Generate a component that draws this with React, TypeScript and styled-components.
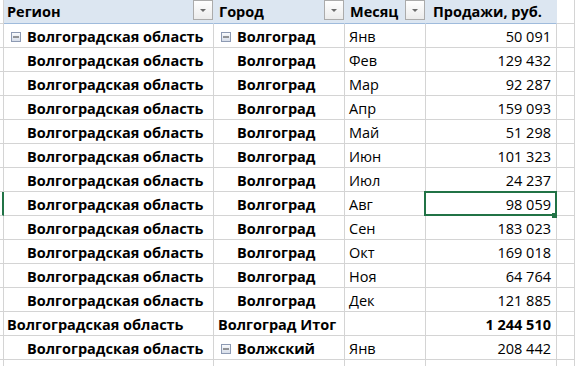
import { FC } from 'react';
import styled, { createGlobalStyle } from 'styled-components';

const GRID = '#d4d4d4';
const GREEN = '#217346';
const HEAD_BG = '#dce6f1';

const GlobalStyle = createGlobalStyle`
  html, body {
    margin: 0;
    padding: 0;
    background: #ffffff;
  }
  body {
    font-family: 'Open Sans', 'Liberation Sans', sans-serif;
    font-size: 14.5px;
    color: #000000;
    overflow: hidden;
  }
`;

const Sheet = styled.div`
  display: grid;
  grid-template-columns: 4px 210px 131px 81px 131px 1fr;
  grid-auto-rows: 24px;
  width: 575px;
  height: 366px;
  overflow: hidden;
`;

const RowHead = styled.div<{ $active?: boolean }>`
  box-sizing: border-box;
  border-bottom: 1px solid ${GRID};
  border-right: ${(p) => (p.$active ? `2px solid ${GREEN}` : `1px solid ${GRID}`)};
`;

const HeadCell = styled.div<{ $plain?: boolean; $indent?: number }>`
  box-sizing: border-box;
  display: flex;
  align-items: flex-start;
  padding-left: ${(p) => p.$indent ?? 3}px;
  background: ${(p) => (p.$plain ? '#ffffff' : HEAD_BG)};
  border-bottom: 1px solid ${(p) => (p.$plain ? GRID : '#9fbbdc')};
  border-right: 1px solid ${(p) => (p.$plain ? GRID : HEAD_BG)};
  font-weight: 700;
  white-space: nowrap;
`;

const HeadTitle = styled.span`
  padding-top: 2px;
  line-height: 20px;
`;

const FilterButton = styled.svg`
  flex: none;
  margin-left: auto;
  width: 20px;
  height: 20px;
`;

const Cell = styled.div<{ $right?: boolean; $bold?: boolean; $indent?: number; $selected?: boolean }>`
  box-sizing: border-box;
  position: relative;
  display: flex;
  align-items: center;
  justify-content: ${(p) => (p.$right ? 'flex-end' : 'flex-start')};
  padding: 2px 5px 0 ${(p) => p.$indent ?? 3}px;
  border-right: 1px solid ${GRID};
  border-bottom: 1px solid ${GRID};
  font-weight: ${(p) => (p.$bold ? 700 : 400)};
  white-space: nowrap;
  overflow: visible;

  ${(p) =>
    p.$selected &&
    `
    &::after {
      content: '';
      position: absolute;
      left: -2px;
      top: -1px;
      right: -1px;
      bottom: -1px;
      border: 2px solid ${GREEN};
      z-index: 1;
    }
    &::before {
      content: '';
      position: absolute;
      right: -1px;
      bottom: -3px;
      width: 5px;
      height: 5px;
      background: ${GREEN};
      z-index: 2;
    }
  `}
`;

const Toggle = styled.svg`
  flex: none;
  width: 10px;
  height: 10px;
  margin: 0 6px 0 4px;
`;

const Filter: FC = () => (
  <FilterButton viewBox="0 0 20 20">
    <defs>
      <linearGradient id="fb" x1="0" y1="0" x2="0" y2="1">
        <stop offset="0" stopColor="#ffffff" />
        <stop offset="1" stopColor="#ebebeb" />
      </linearGradient>
    </defs>
    <rect x="0.5" y="0.5" width="19" height="19" fill="url(#fb)" stroke="#ababab" />
    <path d="M7 9h6l-3 3z" fill="#6b6b6b" />
  </FilterButton>
);

const Minus: FC = () => (
  <Toggle viewBox="0 0 10 10">
    <defs>
      <linearGradient id="tg" x1="0" y1="0" x2="0" y2="1">
        <stop offset="0" stopColor="#fbfcfd" />
        <stop offset="1" stopColor="#d5dce8" />
      </linearGradient>
    </defs>
    <rect x="0.5" y="0.5" width="9" height="9" fill="url(#tg)" stroke="#8d9ab3" />
    <rect x="2" y="4.5" width="6" height="1" fill="#3a3a3a" />
  </Toggle>
);

const months: [string, string][] = [
  ['Янв', '50 091'],
  ['Фев', '129 432'],
  ['Мар', '92 287'],
  ['Апр', '159 093'],
  ['Май', '51 298'],
  ['Июн', '101 323'],
  ['Июл', '24 237'],
  ['Авг', '98 059'],
  ['Сен', '183 023'],
  ['Окт', '169 018'],
  ['Ноя', '64 764'],
  ['Дек', '121 885'],
];

type RowProps = {
  city: string;
  month: string;
  value: string;
  regionOpen?: boolean;
  cityOpen?: boolean;
  selected?: boolean;
};

const DataRow: FC<RowProps> = ({ city, month, value, regionOpen, cityOpen, selected }) => (
  <>
    <RowHead $active={selected} />
    <Cell $bold $indent={regionOpen ? 3 : 23}>
      {regionOpen && <Minus />}
      Волгоградская область
    </Cell>
    <Cell $bold $indent={cityOpen ? 3 : 23}>
      {cityOpen && <Minus />}
      {city}
    </Cell>
    <Cell $indent={4}>{month}</Cell>
    <Cell $right $selected={selected}>
      {value}
    </Cell>
    <Cell />
  </>
);

const App: FC = () => (
  <>
    <GlobalStyle />
    <Sheet>
      <RowHead />
      <HeadCell>
        <HeadTitle>Регион</HeadTitle>
        <Filter />
      </HeadCell>
      <HeadCell $indent={5}>
        <HeadTitle>Город</HeadTitle>
        <Filter />
      </HeadCell>
      <HeadCell $indent={5}>
        <HeadTitle>Месяц</HeadTitle>
        <Filter />
      </HeadCell>
      <HeadCell $indent={7}>
        <HeadTitle>Продажи, руб.</HeadTitle>
      </HeadCell>
      <HeadCell $plain />

      {months.map(([m, v], i) => (
        <DataRow
          key={m}
          city="Волгоград"
          month={m}
          value={v}
          regionOpen={i === 0}
          cityOpen={i === 0}
          selected={m === 'Авг'}
        />
      ))}

      <RowHead />
      <Cell $bold>Волгоградская область</Cell>
      <Cell $bold $indent={4}>Волгоград Итог</Cell>
      <Cell />
      <Cell $right $bold>
        1 244 510
      </Cell>
      <Cell />

      <DataRow city="Волжский" month="Янв" value="208 442" cityOpen />

      <RowHead />
      <Cell />
      <Cell />
      <Cell />
      <Cell />
      <Cell />
    </Sheet>
  </>
);

export default App;
